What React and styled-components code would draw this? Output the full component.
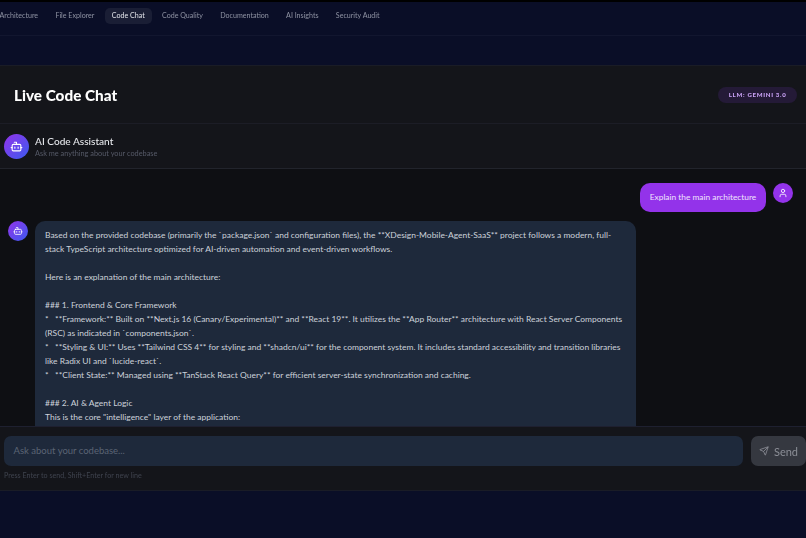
import React from 'react';
import styled, { createGlobalStyle } from 'styled-components';
import { Bot, User, Send } from 'lucide-react';

const tabs = ['Architecture', 'File Explorer', 'Code Chat', 'Code Quality', 'Documentation', 'AI Insights', 'Security Audit'];

const answer = [
  'Based on the provided codebase (primarily the `package.json` and configuration files), the **XDesign-Mobile-Agent-SaaS** project follows a modern, full-stack TypeScript architecture optimized for AI-driven automation and event-driven workflows.',
  '',
  'Here is an explanation of the main architecture:',
  '',
  '### 1. Frontend & Core Framework',
  '*   **Framework:** Built on **Next.js 16 (Canary/Experimental)** and **React 19**. It utilizes the **App Router** architecture with React Server Components (RSC) as indicated in `components.json`.',
  "*   **Styling & UI:** Uses **Tailwind CSS 4** for styling and **shadcn/ui** for the component system. It includes standard accessibility and transition libraries like Radix UI and `lucide-react`.",
  '*   **Client State:** Managed using **TanStack React Query** for efficient server-state synchronization and caching.',
  '',
  '### 2. AI & Agent Logic',
  'This is the core "intelligence" layer of the application:',
];

const GlobalStyle = createGlobalStyle`
  html, body {
    margin: 0;
    height: 100%;
    overflow: hidden;
    background: #0a0e27;
  }
`;

const Page = styled.div`
  width: 806px;
  height: 538px;
  overflow: hidden;
  border-top: 2px solid #000;
  box-sizing: border-box;
  font-family: "Lato", "Noto Sans", sans-serif;
  filter: blur(0.4px);
`;

const Nav = styled.nav`
  height: 34px;
  box-sizing: border-box;
  border-bottom: 1px solid #12162f;
  display: flex;
  align-items: center;
  gap: 3.3px;
  margin-left: -7.5px;
  padding-bottom: 5px;
`;

const Tab = styled.div`
  font-size: 7.1px;
  line-height: 16px;
  padding: 0 7px;
  border-radius: 5px;
  color: ${(p) => (p.$active ? '#e2e4ea' : '#8f93a3')};
  background: ${(p) => (p.$active ? '#1a1e35' : 'transparent')};
`;

const Card = styled.section`
  width: 834px;
  height: 426px;
  margin: 29px 0 0 -12px;
  box-sizing: border-box;
  background: #14151a;
  border: 1px solid #1a1c26;
  border-radius: 12px;
  display: flex;
  flex-direction: column;
  overflow: hidden;
`;

const CardHeader = styled.header`
  height: 58px;
  flex: none;
  box-sizing: border-box;
  border-bottom: 1px solid #1c1d26;
  display: flex;
  align-items: center;
  justify-content: space-between;
  padding: 0 24px 0 25px;
`;

const Title = styled.h1`
  margin: 0;
  font-size: 15.3px;
  font-weight: 900;
  color: #fff;
`;

const Badge = styled.span`
  font-size: 6.1px;
  font-weight: 900;
  letter-spacing: 0.7px;
  line-height: 16px;
  padding: 0 10.5px;
  border-radius: 8px;
  color: #c9a2f5;
  background: #241a37;
`;

const ChatHeader = styled.div`
  height: 45px;
  flex: none;
  box-sizing: border-box;
  border-bottom: 1px solid #22242c;
  display: flex;
  align-items: center;
  gap: 6px;
  padding: 0 15px;
`;

const HeaderText = styled.div`
  padding-top: 2px;
`;

const Avatar = styled.div`
  width: ${(p) => p.$size}px;
  height: ${(p) => p.$size}px;
  flex: none;
  border-radius: 50%;
  display: flex;
  align-items: center;
  justify-content: center;
  color: #fff;
  background: ${(p) => (p.$user ? '#9333ea' : 'linear-gradient(135deg, #9333ea, #3b5bf0)')};
`;

const HeaderName = styled.div`
  font-size: 10.1px;
  line-height: 13px;
  font-weight: 500;
  color: #e5e7eb;
`;

const HeaderSub = styled.div`
  font-size: 7.35px;
  line-height: 11px;
  color: #565a68;
`;

const Messages = styled.div`
  flex: 1;
  min-height: 0;
  background: #0e0f13;
  overflow: hidden;
  padding: 14px 28px 0 19px;
  display: flex;
  flex-direction: column;
  gap: 9px;
`;

const UserRow = styled.div`
  display: flex;
  justify-content: flex-end;
  gap: 7px;
`;

const UserBubble = styled.div`
  width: 126px;
  height: 29px;
  box-sizing: border-box;
  border-radius: 10px;
  background: #9333ea;
  color: #f0e4fd;
  font-size: 8.35px;
  line-height: 29px;
  text-align: center;
`;

const BotRow = styled.div`
  display: flex;
  gap: 7px;
`;

const BotBubble = styled.div`
  width: 601px;
  height: 300px;
  flex: none;
  box-sizing: border-box;
  padding: 7px 10px;
  border-radius: 10px 10px 0 0;
  background: #1e293b;
  color: #cdd2da;
  font-size: 8.46px;
  line-height: 14px;
`;

const AnswerLine = styled.div`
  min-height: 14px;
  white-space: pre-wrap;
`;

const Composer = styled.div`
  height: 64px;
  flex: none;
  box-sizing: border-box;
  border-top: 1px solid #1e2030;
  padding: 9px 15px 0 15px;
`;

const InputRow = styled.div`
  display: flex;
  gap: 8px;
`;

const Input = styled.div`
  flex: 1;
  height: 30px;
  box-sizing: border-box;
  padding: 0 9.5px;
  border-radius: 7px;
  background: #1e293b;
  color: #5b6474;
  font-size: 9.5px;
  line-height: 30px;
`;

const SendButton = styled.div`
  width: 55px;
  height: 30px;
  box-sizing: border-box;
  border-radius: 7px;
  background: #353840;
  color: #8b8e96;
  font-size: 11px;
  display: flex;
  align-items: center;
  justify-content: center;
  gap: 5px;
`;

const Hint = styled.div`
  margin-top: 5px;
  font-size: 7.15px;
  line-height: 10px;
  color: #3f434e;
`;

export default function App() {
  return (
    <Page>
      <GlobalStyle />
      <Nav>
        {tabs.map((t) => (
          <Tab key={t} $active={t === 'Code Chat'}>{t}</Tab>
        ))}
      </Nav>
      <Card>
        <CardHeader>
          <Title>Live Code Chat</Title>
          <Badge>LLM: GEMINI 3.0</Badge>
        </CardHeader>
        <ChatHeader>
          <Avatar $size={25}><Bot size={13} /></Avatar>
          <HeaderText>
            <HeaderName>AI Code Assistant</HeaderName>
            <HeaderSub>Ask me anything about your codebase</HeaderSub>
          </HeaderText>
        </ChatHeader>
        <Messages>
          <UserRow>
            <UserBubble>Explain the main architecture</UserBubble>
            <Avatar $size={20} $user><User size={10} /></Avatar>
          </UserRow>
          <BotRow>
            <Avatar $size={20}><Bot size={10} /></Avatar>
            <BotBubble>
              {answer.map((line, i) => (
                <AnswerLine key={i}>{line}</AnswerLine>
              ))}
            </BotBubble>
          </BotRow>
        </Messages>
        <Composer>
          <InputRow>
            <Input>Ask about your codebase...</Input>
            <SendButton><Send size={10} />Send</SendButton>
          </InputRow>
          <Hint>Press Enter to send, Shift+Enter for new line</Hint>
        </Composer>
      </Card>
    </Page>
  );
}
